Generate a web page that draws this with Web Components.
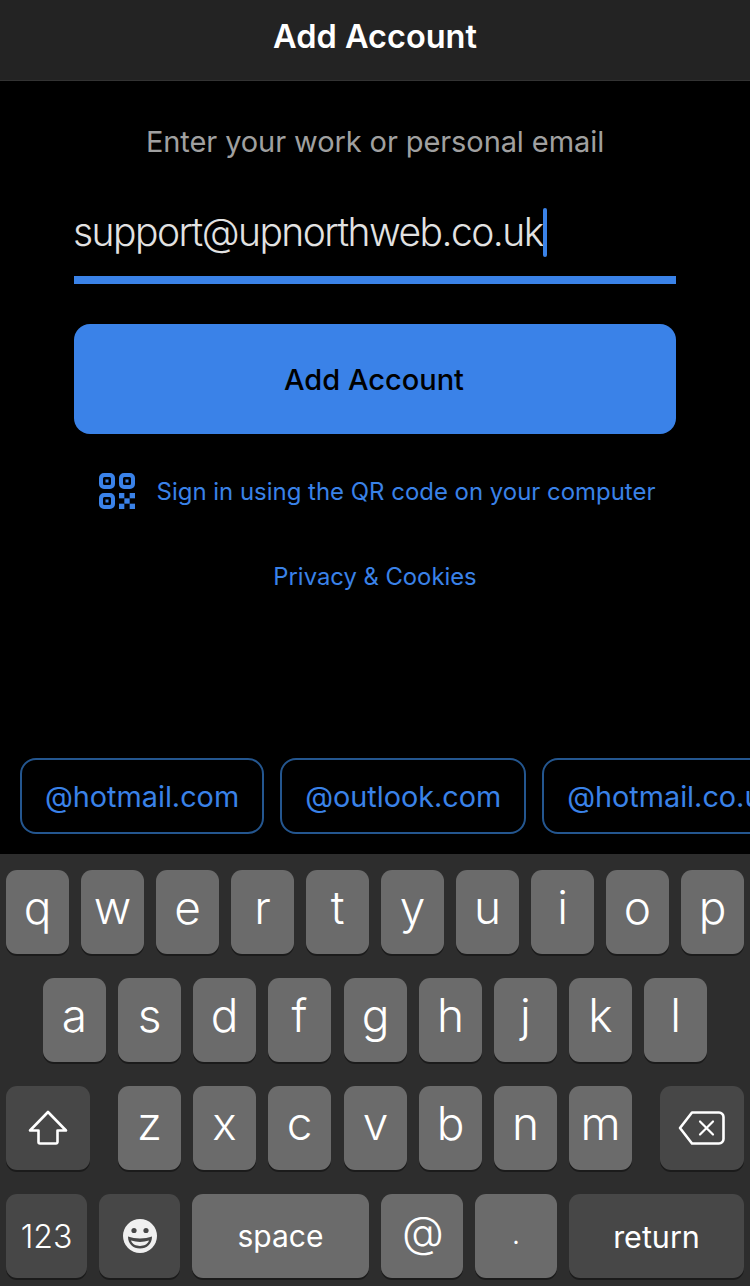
<!DOCTYPE html>
<html lang="en">
<head>
<meta charset="utf-8">
<title>Add Account</title>
<style>
    html, body {
        margin: 0;
        height: 100%;
        background: #000;
    }
    body {
        display: flex;
        flex-direction: column;
        height: 1286px;
        overflow: hidden;
        font-family: Inter, "Liberation Sans", sans-serif;
    }
</style>
</head>
<body>
    <app-header>Add Account</app-header>
    <account-form email="support@upnorthweb.co.uk"></account-form>
    <domain-chips></domain-chips>
    <ios-keyboard></ios-keyboard>

<script>
class AppHeader extends HTMLElement {
    constructor() {
        super();
        this.attachShadow({ mode: "open" });
        this.shadowRoot.innerHTML = `
            <style>
                :host {
                    display: flex;
                    align-items: center;
                    justify-content: center;
                    box-sizing: border-box;
                    height: 81px;
                    padding-bottom: 7px;
                    background: #232323;
                    border-bottom: 1px solid #333;
                    color: #fff;
                    font-size: 32.5px;
                    font-weight: 600;
                }
            </style>
            <slot></slot>
        `;
    }
}

class AccountForm extends HTMLElement {
    constructor() {
        super();
        this.attachShadow({ mode: "open" });
        const finder = (x, y) => `
            <path fill-rule="evenodd" transform="translate(${x} ${y})" d="M5 0h6a5 5 0 0 1 5 5v6a5 5 0 0 1-5 5H5a5 5 0 0 1-5-5V5a5 5 0 0 1 5-5zM5.5 4A1.500 1.500 0 0 0 4 5.500v5A1.500 1.500 0 0 0 5.500 12h5a1.500 1.500 0 0 0 1.500-1.500v-5A1.500 1.500 0 0 0 10.500 4z"/>
            <rect x="${x + 6.5}" y="${y + 6.5}" width="3" height="3"/>`;
        this.shadowRoot.innerHTML = `
            <style>
                :host {
                    display: flex;
                    flex-direction: column;
                    padding: 40px 74px 0;
                    color: #3a82e8;
                }
                .label {
                    height: 42px;
                    line-height: 42px;
                    text-align: center;
                    font-size: 29px;
                    letter-spacing: -0.09px;
                    color: #a0a0a0;
                    white-space: nowrap;
                }
                .field {
                    display: flex;
                    align-items: center;
                    box-sizing: border-box;
                    height: 121px;
                    padding: 32px 0 6px 0;
                    border-bottom: 8px solid #3a82e8;
                    color: #e2e2e2;
                    font-size: 39px;
                    letter-spacing: -1.54px;
                    font-weight: 300;
                    white-space: nowrap;
                }
                .field #email {
                    margin-left: -1px;
                    padding-bottom: 2px;
                }
                .caret {
                    flex: none;
                    width: 4px;
                    height: 49px;
                    border-radius: 2px;
                    background: #3a82e8;
                }
                .add {
                    display: flex;
                    align-items: center;
                    justify-content: center;
                    box-sizing: border-box;
                    height: 110px;
                    margin-top: 40px;
                    padding-right: 2px;
                    border-radius: 16px;
                    background: #3a82e8;
                    color: #000;
                    font-size: 29px;
                    font-weight: 500;
                }
                .qr {
                    display: flex;
                    align-items: center;
                    justify-content: center;
                    gap: 22px;
                    height: 36px;
                    margin-top: 39px;
                    padding-left: 4px;
                    font-size: 23.95px;
                    white-space: nowrap;
                }
                .qr svg {
                    flex: none;
                }
                .privacy {
                    height: 30px;
                    line-height: 30px;
                    margin-top: 53px;
                    text-align: center;
                    font-size: 23.8px;
                }
            </style>
            <div class="label">Enter your work or personal email</div>
            <div class="field"><span id="email"></span><span class="caret"></span></div>
            <div class="add">Add Account</div>
            <div class="qr">
                <svg width="36" height="36" viewBox="0 0 36 36" fill="#3a82e8">
                    ${finder(0, 0)}
                    ${finder(20, 0)}
                    ${finder(0, 20)}
                    <rect x="20" y="20" width="5.330" height="5.330"/>
                    <rect x="30.670" y="20" width="5.330" height="5.330"/>
                    <rect x="25.330" y="25.330" width="5.340" height="5.340"/>
                    <rect x="20" y="30.670" width="5.330" height="5.330"/>
                    <rect x="30.670" y="30.670" width="5.330" height="5.330"/>
                </svg>
                <span>Sign in using the QR code on your computer</span>
            </div>
            <div class="privacy">Privacy &amp; Cookies</div>
        `;
    }

    connectedCallback() {
        this.shadowRoot.getElementById("email").innerText = this.getAttribute("email");
    }
}

class DomainChips extends HTMLElement {
    constructor() {
        super();
        this.attachShadow({ mode: "open" });
        this.shadowRoot.innerHTML = `
            <style>
                :host {
                    display: flex;
                    gap: 16px;
                    margin-top: auto;
                    margin-bottom: 20px;
                    padding-left: 20px;
                    overflow: hidden;
                    flex: none;
                }
                span {
                    flex: none;
                    box-sizing: border-box;
                    height: 76px;
                    line-height: 74px;
                    padding: 0 23px;
                    border: 2px solid #24568f;
                    border-radius: 16px;
                    color: #3a82e8;
                    font-size: 28.800px;
                    white-space: nowrap;
                }
            </style>
            <span>@hotmail.com</span>
            <span>@outlook.com</span>
            <span>@hotmail.co.uk</span>
        `;
    }
}

class KbKey extends HTMLElement {
    constructor() {
        super();
        this.attachShadow({ mode: "open" });
        this.shadowRoot.innerHTML = `
            <style>
                :host {
                    display: flex;
                    align-items: center;
                    justify-content: center;
                    box-sizing: border-box;
                    flex: none;
                    width: 63px;
                    height: 84px;
                    padding-bottom: 10px;
                    border-radius: 11px;
                    background: #6b6b6b;
                    box-shadow: 0 2px 0 #1b1b1b;
                    color: #fff;
                    font-size: 46px;
                    font-weight: 300;
                }
                :host([small]) {
                    padding-bottom: 0;
                    font-size: 30px;
                    font-weight: 400;
                }
                :host([dark]) {
                    background: #474747;
                }
                :host([icon]) {
                    padding-bottom: 0;
                }
            </style>
            <slot></slot>
        `;
    }
}

class IosKeyboard extends HTMLElement {
    constructor() {
        super();
        this.attachShadow({ mode: "open" });
        // nudge: the key that sits 1px further right, the real keyboard rounds half pixels
        const keys = (letters, nudge = -1) => letters.split("").map((k, i) =>
            `<kb-key${i === nudge ? ' style="margin-left:1px"' : ""}>${k}</kb-key>`).join("");
        this.shadowRoot.innerHTML = `
            <style>
                :host {
                    display: flex;
                    flex-direction: column;
                    gap: 24px;
                    flex: none;
                    box-sizing: border-box;
                    height: 432px;
                    padding: 16px 6px 0;
                    background: #2d2d2d;
                }
                .row {
                    display: flex;
                    justify-content: center;
                    gap: 12px;
                }
                .row3 {
                    justify-content: space-between;
                }
                .letters {
                    display: flex;
                    gap: 12px;
                }
                .wide {
                    width: 84px;
                }
                .row4 {
                    display: grid;
                    grid-template-columns: 81px 81px 177px 82px 82px 175px;
                    gap: 12px;
                }
                .row4 kb-key {
                    width: auto;
                }
            </style>
            <div class="row">${keys("qwertyuiop")}</div>
            <div class="row">${keys("asdfghjkl", 4)}</div>
            <div class="row row3">
                <kb-key class="wide" dark icon>
                    <svg width="40" height="36" viewBox="0 0 40 36" fill="none" stroke="#fff" stroke-width="2.6" stroke-linejoin="round">
                        <path d="M20 2 L38 20.5 H29.5 V32 a1.5 1.5 0 0 1-1.5 1.5 H12 a1.5 1.5 0 0 1-1.5-1.5 V20.5 H2 Z"/>
                    </svg>
                </kb-key>
                <div class="letters">${keys("zxcvbnm", 3)}</div>
                <kb-key class="wide" dark icon>
                    <svg width="48" height="36" viewBox="0 0 48 36" fill="none" stroke="#fff" stroke-width="2.6" stroke-linejoin="round" stroke-linecap="round">
                        <path d="M14 2.5 H41 a4.5 4.5 0 0 1 4.5 4.5 V29 a4.5 4.5 0 0 1-4.5 4.5 H14 L2 18 Z"/>
                        <path d="M22 11.5 L35 24.5 M35 11.5 L22 24.5" stroke-width="2.2"/>
                    </svg>
                </kb-key>
            </div>
            <div class="row4">
                <kb-key dark small style="font-size:32px;font-weight:300">123</kb-key>
                <kb-key dark icon>
                    <svg width="36" height="36" viewBox="0 0 36 36">
                        <circle cx="18" cy="18" r="17" fill="#f0f0f0"/>
                        <circle cx="12" cy="12.5" r="2.6" fill="#474747"/>
                        <circle cx="24" cy="12.5" r="2.6" fill="#474747"/>
                        <path d="M6 18.5 C13 21 23 21 30 18.5 C30 26 25 30.5 18 30.5 C11 30.5 6 26 6 18.5 Z" fill="#474747"/>
                        <path d="M9 22.6 C15 24.4 21 24.4 27 22.6 C25.5 26.6 22 28 18 28 C14 28 10.5 26.6 9 22.6 Z" fill="#f0f0f0"/>
                    </svg>
                </kb-key>
                <kb-key small>space</kb-key>
                <kb-key small style="font-size:43px;font-weight:300;padding:0 0 10px 2px">@</kb-key>
                <kb-key small style="padding-bottom:6px;font-weight:300">.</kb-key>
                <kb-key dark small style="font-size:30.5px">return</kb-key>
            </div>
        `;
    }
}

customElements.define("app-header", AppHeader);
customElements.define("account-form", AccountForm);
customElements.define("domain-chips", DomainChips);
customElements.define("kb-key", KbKey);
customElements.define("ios-keyboard", IosKeyboard);
</script>
</body>
</html>
